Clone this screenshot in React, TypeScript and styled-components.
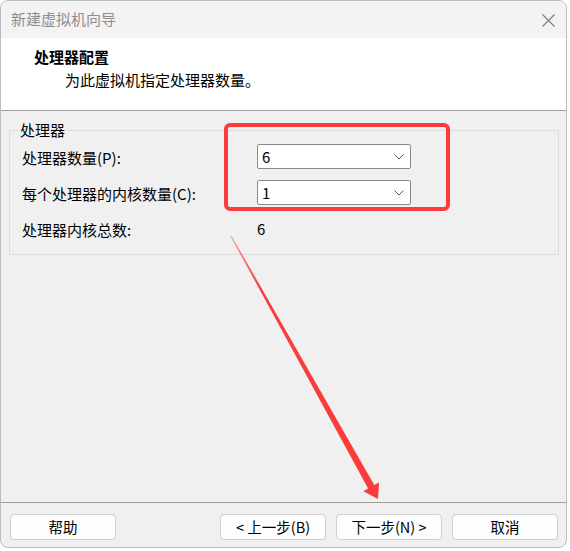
import React from "react";
import styled, { createGlobalStyle } from "styled-components";

const Global = createGlobalStyle`
  html, body { margin: 0; padding: 0; background: #ffffff; }
  body { font-family: "Noto Sans CJK SC", "Noto Sans", sans-serif; }
  * { box-sizing: border-box; }
`;

const Window = styled.div`
  position: relative;
  width: 567px;
  height: 548px;
  border: 1px solid #bcbcbc;
  border-radius: 8px;
  background: #f0f0f0;
  overflow: hidden;
  display: flex;
  flex-direction: column;
  font-size: 15px;
  color: #000;
`;

const TitleBar = styled.div`
  height: 37px;
  flex: none;
  display: flex;
  align-items: center;
  justify-content: space-between;
  padding: 0 11px 0 10px;
  background: #f3f3f3;
`;

const TitleText = styled.div`
  font-size: 15px;
  color: #8e8e8e;
  line-height: 20px;
  margin-top: -1px;
`;

const CloseIcon = styled.svg`
  width: 13px;
  height: 13px;
  margin-top: 2px;
`;

const Header = styled.div`
  height: 73px;
  flex: none;
  background: #ffffff;
  border-bottom: 1px solid #a0a0a0;
  padding: 9px 0 0 33px;
  display: flex;
  flex-direction: column;
  gap: 3px;
`;

const HeaderTitle = styled.div`
  font-weight: 700;
  font-size: 15px;
  line-height: 20px;
`;

const HeaderSub = styled.div`
  font-size: 15px;
  line-height: 20px;
  margin-left: 31px;
`;

const Body = styled.div`
  flex: 1;
  padding: 10px 7px 0 8px;
`;

const Group = styled.fieldset`
  margin: 0;
  padding: 5px 0 13px 12px;
  border: 1px solid #dcdcdc;
  min-width: 0;
`;

const Legend = styled.legend`
  margin-left: -4px;
  padding: 0 2px;
  font-size: 15px;
  line-height: 18px;
`;

const Rows = styled.div`
  display: grid;
  grid-template-columns: 235px 154px;
  grid-auto-rows: 25px;
  row-gap: 11px;
  align-items: center;
`;

const Label = styled.div`
  font-size: 15px;
  line-height: 20px;
  padding-top: 2px;
`;

const Value = styled.div`
  font-size: 15px;
  line-height: 20px;
  padding-top: 1px;
`;

const Select = styled.div`
  height: 25px;
  background: #ffffff;
  border: 1px solid #8a8a8a;
  border-radius: 2px;
  display: flex;
  align-items: center;
  justify-content: space-between;
  padding: 0 6px 0 4px;
  font-size: 15px;
`;

const Chevron = styled.svg`
  width: 10px;
  height: 6px;
`;

const Footer = styled.div`
  flex: none;
  height: 45px;
  border-top: 1px solid #a0a0a0;
  display: flex;
  justify-content: space-between;
  padding: 11px 8px 0 9px;
`;

const ButtonGroup = styled.div`
  display: flex;
  gap: 10px;
`;

const Button = styled.button`
  width: 106px;
  height: 26px;
  background: #fdfdfd;
  border: 1px solid #d0d0d0;
  border-radius: 4px;
  font-family: "Noto Sans CJK SC", "Noto Sans", sans-serif;
  font-size: 14.5px;
  color: #000;
  padding: 0;
  line-height: 22px;
`;

const RedBox = styled.div`
  position: absolute;
  left: 223px;
  top: 122px;
  width: 226px;
  height: 88px;
  border: 4px solid #fa3c3c;
  border-radius: 6px;
  pointer-events: none;
`;

const ArrowLayer = styled.svg`
  position: absolute;
  left: -1px;
  top: -1px;
  width: 567px;
  height: 548px;
  pointer-events: none;
`;

const ChevronDown = () => (
  <Chevron viewBox="0 0 10 6">
    <path d="M0.5 0.5 L5 5 L9.5 0.5" fill="none" stroke="#555" strokeWidth="1" />
  </Chevron>
);

export default function App() {
  return (
    <>
      <Global />
      <Window>
        <TitleBar>
          <TitleText>新建虚拟机向导</TitleText>
          <CloseIcon viewBox="0 0 13 13">
            <path d="M0.5 0.5 L12.5 12.5 M12.5 0.5 L0.5 12.5" stroke="#7c7c7c" strokeWidth="1.1" fill="none" />
          </CloseIcon>
        </TitleBar>
        <Header>
          <HeaderTitle>处理器配置</HeaderTitle>
          <HeaderSub>为此虚拟机指定处理器数量。</HeaderSub>
        </Header>
        <Body>
          <Group>
            <Legend>处理器</Legend>
            <Rows>
              <Label>处理器数量(P):</Label>
              <Select>
                <span>6</span>
                <ChevronDown />
              </Select>
              <Label>每个处理器的内核数量(C):</Label>
              <Select>
                <span>1</span>
                <ChevronDown />
              </Select>
              <Label>处理器内核总数:</Label>
              <Value>6</Value>
            </Rows>
          </Group>
        </Body>
        <Footer>
          <Button>帮助</Button>
          <ButtonGroup>
            <Button>&lt; 上一步(B)</Button>
            <Button>下一步(N) &gt;</Button>
            <Button>取消</Button>
          </ButtonGroup>
        </Footer>
        <RedBox />
        <ArrowLayer viewBox="0 0 567 548">
          <defs>
            <linearGradient id="fade" x1="231" y1="236" x2="260" y2="288" gradientUnits="userSpaceOnUse">
              <stop offset="0" stopColor="#fa3c3c" stopOpacity="0.45" />
              <stop offset="1" stopColor="#fa3c3c" stopOpacity="1" />
            </linearGradient>
          </defs>
          <polygon
            points="230.5,236.3 231.5,235.7 374.3,485.1 379.1,482.4 378,499 363.3,491.2 368.1,488.5"
            fill="url(#fade)"
          />
        </ArrowLayer>
      </Window>
    </>
  );
}
